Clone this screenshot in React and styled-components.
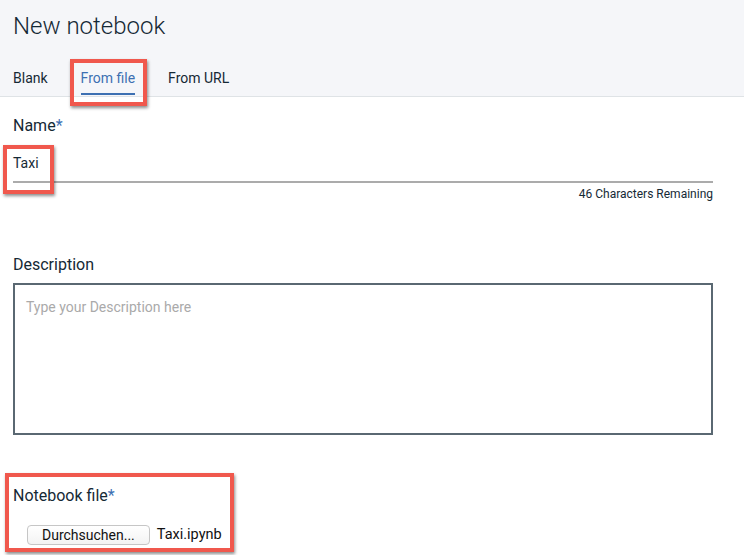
import React from "react";
import styled, { createGlobalStyle } from "styled-components";

const GlobalStyle = createGlobalStyle`
  body {
    margin: 0;
    background: #fff;
    font-family: Roboto, "Liberation Sans", sans-serif;
    color: #152935;
  }
`;

const Header = styled.div`
  background: #f5f6f9;
  padding: 12px 13px 1px;
  border-bottom: 1px solid #dfe3e6;
`;

const Title = styled.h1`
  margin: 0;
  font-size: 24px;
  line-height: 28px;
  font-weight: 300;
  color: #152935;
`;

const Tabs = styled.div`
  display: flex;
  gap: 33px;
  margin-top: 28px;
`;

const Tab = styled.div`
  position: relative;
  font-size: 14px;
  line-height: 20px;
  padding-bottom: 5px;
  color: ${(p) => (p.active ? "#3d70b2" : "#152935")};
  border-bottom: 2px solid ${(p) => (p.active ? "#3d70b2" : "transparent")};
`;

const Marker = styled.span`
  position: absolute;
  box-sizing: border-box;
  top: ${(p) => p.top}px;
  left: ${(p) => p.left}px;
  right: ${(p) => (p.right !== undefined ? `${p.right}px` : "auto")};
  bottom: ${(p) => (p.bottom !== undefined ? `${p.bottom}px` : "auto")};
  width: ${(p) => (p.w ? `${p.w}px` : "auto")};
  height: ${(p) => (p.h ? `${p.h}px` : "auto")};
  border: 4px solid #f0584d;
  box-shadow: 1px 2px 3px rgba(0, 0, 0, 0.45);
  pointer-events: none;
`;

const Form = styled.div`
  width: 700px;
  padding: 0 13px 12px;
`;

const Label = styled.div`
  font-size: 16px;
  line-height: 20px;
  color: #152935;
  margin-top: ${(p) => p.mt || 0}px;
`;

const Required = styled.span`
  color: #3d70b2;
`;

const InputWrap = styled.div`
  position: relative;
`;

const TextInput = styled.div`
  font-size: 14px;
  line-height: 20px;
  padding: 17px 0 8px;
  border-bottom: 2px solid #ababab;
`;

const Counter = styled.div`
  text-align: right;
  font-size: 12px;
  line-height: 16px;
  margin-top: 3px;
`;

const TextArea = styled.textarea`
  display: block;
  box-sizing: border-box;
  width: 700px;
  height: 152px;
  margin-top: 8px;
  padding: 12px 11px;
  border: 2px solid #5a6872;
  border-radius: 0;
  resize: none;
  font-family: Roboto, "Liberation Sans", sans-serif;
  font-size: 14px;
  line-height: 20px;
  color: #152935;
  &::placeholder {
    color: #aaaaaa;
  }
`;

const FileSection = styled.div`
  position: relative;
  width: fit-content;
  margin-top: 51px;
`;

const FileRow = styled.div`
  display: flex;
  align-items: center;
  gap: 7px;
  margin-top: 19px;
  padding-left: 14px;
`;

const BrowseButton = styled.button`
  height: 20px;
  padding: 0 14px;
  border: 1px solid #c6c6c6;
  border-radius: 4px;
  background: linear-gradient(#ffffff, #f3f3f3);
  font-family: Roboto, "Liberation Sans", sans-serif;
  font-size: 14px;
  line-height: 18px;
  color: #111;
`;

const FileName = styled.span`
  font-size: 14.5px;
  line-height: 20px;
  color: #111;
`;

export default function App() {
  return (
    <>
      <GlobalStyle />
      <Header>
        <Title>New notebook</Title>
        <Tabs>
          <Tab>Blank</Tab>
          <Tab active>
            From file
            <Marker top={-9} left={-11} right={-12} bottom={-13} />
          </Tab>
          <Tab>From URL</Tab>
        </Tabs>
      </Header>
      <Form>
        <Label mt={19}>
          Name<Required>*</Required>
        </Label>
        <InputWrap>
          <TextInput>Taxi</TextInput>
          <Marker top={9} left={-10} w={51} h={49} />
        </InputWrap>
        <Counter>46 Characters Remaining</Counter>
        <Label mt={53}>Description</Label>
        <TextArea placeholder="Type your Description here" />
        <FileSection>
          <Label>
            Notebook file<Required>*</Required>
          </Label>
          <FileRow>
            <BrowseButton>Durchsuchen...</BrowseButton>
            <FileName>Taxi.ipynb</FileName>
          </FileRow>
          <Marker top={-13} left={-8} right={-12} bottom={-7} />
        </FileSection>
      </Form>
    </>
  );
}
